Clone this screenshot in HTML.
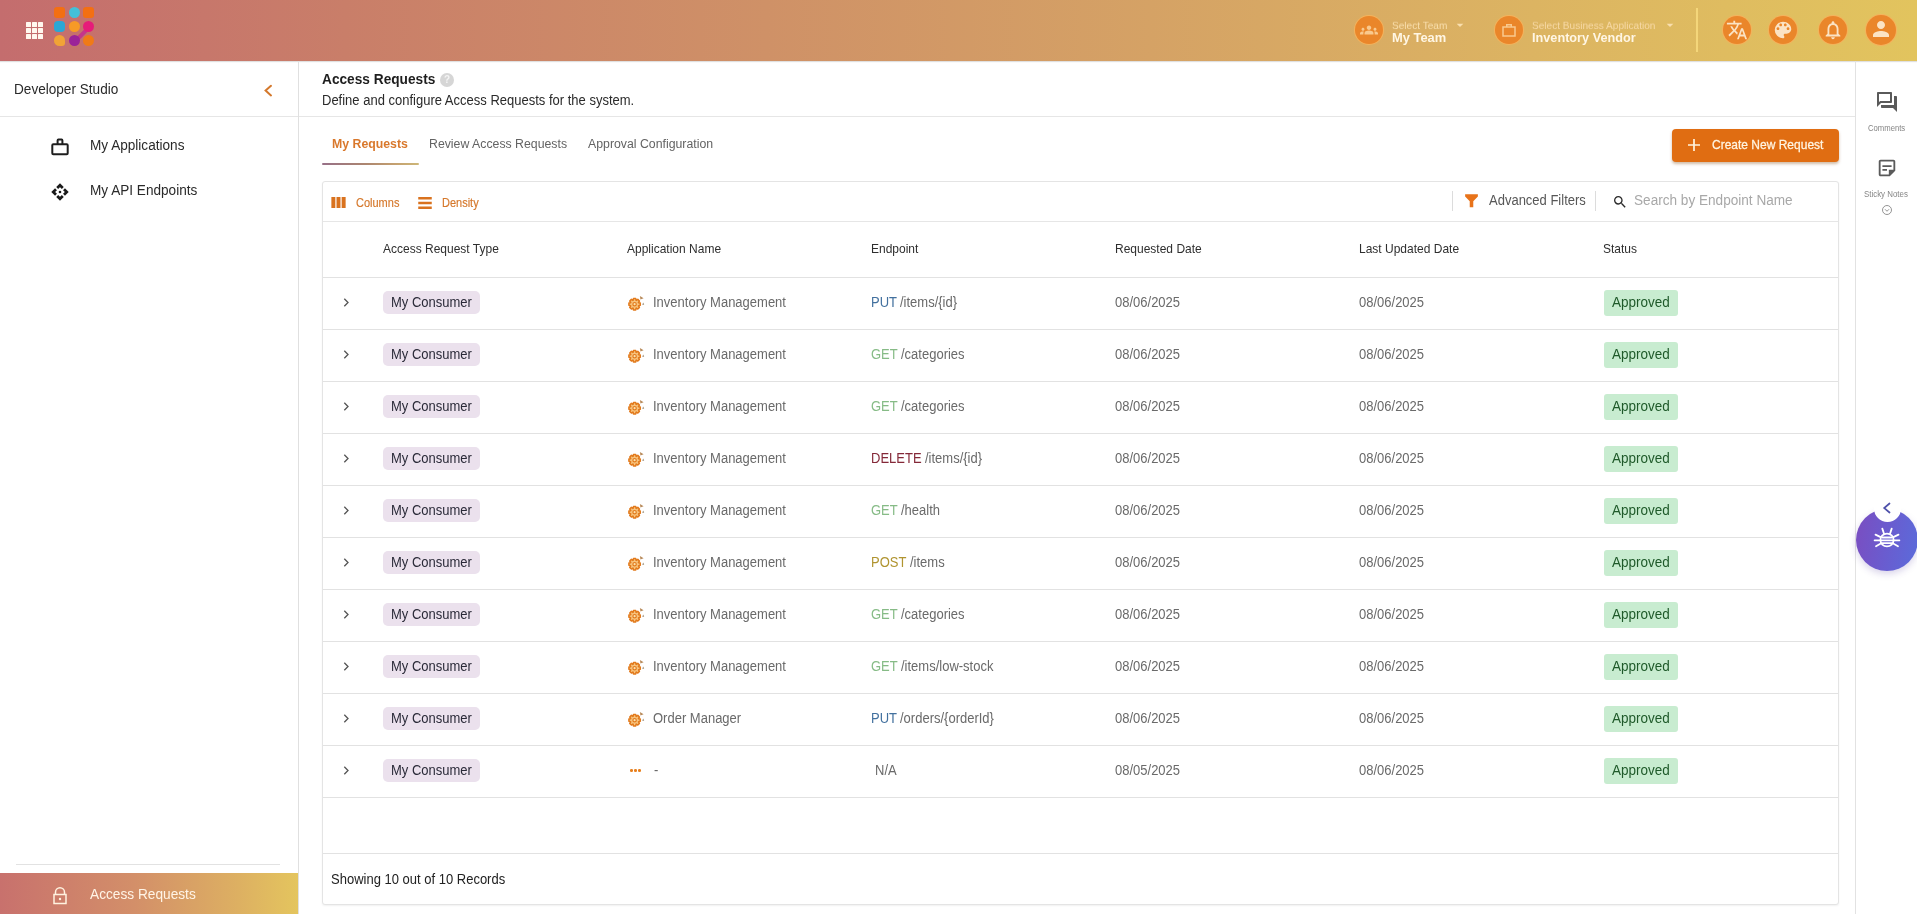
<!DOCTYPE html>
<html><head><meta charset="utf-8">
<style>
*{box-sizing:border-box;margin:0;padding:0}
html,body{width:1917px;height:914px;overflow:hidden;background:#fff;font-family:"Liberation Sans",sans-serif;color:#222}
.abs{position:absolute;display:block}
.t{position:absolute;white-space:nowrap;line-height:1;will-change:transform}
</style></head>
<body>
<div class="abs" style="left:0px;top:0px;width:1917px;height:61px;background:linear-gradient(90deg,#c46d6e 0%,#c97e69 18%,#cf9167 40%,#d5a265 60%,#dcb462 80%,#e2c45e 100%);box-shadow:0 1px 1px rgba(0,0,0,0.12)"></div>
<div class="abs" style="left:26px;top:22px;width:4.5px;height:4.5px;background:#fff8ee;border-radius:0.5px"></div>
<div class="abs" style="left:26px;top:28px;width:4.5px;height:4.5px;background:#fff8ee;border-radius:0.5px"></div>
<div class="abs" style="left:26px;top:34px;width:4.5px;height:4.5px;background:#fff8ee;border-radius:0.5px"></div>
<div class="abs" style="left:32px;top:22px;width:4.5px;height:4.5px;background:#fff8ee;border-radius:0.5px"></div>
<div class="abs" style="left:32px;top:28px;width:4.5px;height:4.5px;background:#fff8ee;border-radius:0.5px"></div>
<div class="abs" style="left:32px;top:34px;width:4.5px;height:4.5px;background:#fff8ee;border-radius:0.5px"></div>
<div class="abs" style="left:38px;top:22px;width:4.5px;height:4.5px;background:#fff8ee;border-radius:0.5px"></div>
<div class="abs" style="left:38px;top:28px;width:4.5px;height:4.5px;background:#fff8ee;border-radius:0.5px"></div>
<div class="abs" style="left:38px;top:34px;width:4.5px;height:4.5px;background:#fff8ee;border-radius:0.5px"></div>
<div class="abs" style="left:73px;top:32.5px;width:17px;height:4px;background:#c5358a;transform:rotate(-45deg);border-radius:2px"></div>
<div class="abs" style="left:54.0px;top:7.0px;width:11px;height:11px;background:#f36f12;border-radius:3px"></div>
<div class="abs" style="left:68.6px;top:7.0px;width:11px;height:11px;background:#43c0d8;border-radius:50%"></div>
<div class="abs" style="left:83.2px;top:7.0px;width:11px;height:11px;background:#f36f12;border-radius:3px"></div>
<div class="abs" style="left:54.0px;top:21.2px;width:11px;height:11px;background:#2aa7d4;border-radius:4px"></div>
<div class="abs" style="left:68.6px;top:21.2px;width:11px;height:11px;background:#f79a26;border-radius:50%"></div>
<div class="abs" style="left:83.2px;top:21.2px;width:11px;height:11px;background:#e61c79;border-radius:50%"></div>
<div class="abs" style="left:54.0px;top:35.4px;width:11px;height:11px;background:#f1a336;border-radius:50% 50% 3px 50%"></div>
<div class="abs" style="left:68.6px;top:35.4px;width:11px;height:11px;background:#9b2398;border-radius:50%"></div>
<div class="abs" style="left:83.2px;top:35.4px;width:11px;height:11px;background:#f07a17;border-radius:50%"></div>
<div class="abs" style="left:1355px;top:16px;width:28px;height:28px;background:#ea862a;border-radius:50%;box-shadow:0 0 0 1px #f5b25c"></div>
<svg class="abs" style="left:1360px;top:21px;" width="18" height="18" viewBox="0 0 24 24"><path fill="#f9c98e" d="M12 12.75c1.63 0 3.07.39 4.24.9 1.08.48 1.76 1.56 1.76 2.73V18H6v-1.61c0-1.18.68-2.26 1.76-2.73 1.17-.52 2.61-.91 4.24-.91zM4 13c1.1 0 2-.9 2-2s-.9-2-2-2-2 .9-2 2 .9 2 2 2zm1.13 1.1c-.37-.06-.74-.1-1.13-.1-.99 0-1.93.21-2.78.58C.48 14.9 0 15.62 0 16.43V18h4.5v-1.61c0-.83.23-1.61.63-2.29zM20 13c1.1 0 2-.9 2-2s-.9-2-2-2-2 .9-2 2 .9 2 2 2zm4 3.43c0-.81-.48-1.53-1.22-1.85-.85-.37-1.79-.58-2.78-.58-.39 0-.76.04-1.13.1.4.68.63 1.46.63 2.29V18H24v-1.57zM12 6c1.66 0 3 1.34 3 3s-1.34 3-3 3-3-1.34-3-3 1.34-3 3-3z"/></svg>
<div class="t" style="left:1391.5px;top:21.25px;font-size:10.1px;color:#f9dfae;font-weight:normal;transform-origin:0 8.55px;transform:scaleY(0.92);">Select Team</div>
<div class="t" style="left:1391.5px;top:32.48px;font-size:12.9px;color:#fff6e4;font-weight:bold;transform-origin:0 10.92px;transform:scaleY(1.0);">My Team</div>
<svg class="abs" style="left:1455px;top:20px;" width="10" height="10" viewBox="0 0 24 24"><path fill="#f9dfae" d="M4 9l8 8 8-8z"/></svg>
<div class="abs" style="left:1495px;top:16px;width:28px;height:28px;background:#ea862a;border-radius:50%;box-shadow:0 0 0 1px #f5b25c"></div>
<svg class="abs" style="left:1500px;top:21px;" width="18" height="18" viewBox="0 0 24 24"><path fill="none" stroke="#f9c98e" stroke-width="2" d="M4 8h16v12H4zM9 8V5h6v3"/></svg>
<div class="t" style="left:1531.5px;top:21.25px;font-size:10.1px;color:#f7d9a6;font-weight:normal;transform-origin:0 8.55px;transform:scaleY(0.92);">Select Business Application</div>
<div class="t" style="left:1531.5px;top:32.45px;font-size:12.7px;color:#fff6e4;font-weight:bold;transform-origin:0 10.75px;transform:scaleY(1.0);">Inventory Vendor</div>
<svg class="abs" style="left:1665px;top:20px;" width="10" height="10" viewBox="0 0 24 24"><path fill="#f9dfae" d="M4 9l8 8 8-8z"/></svg>
<div class="abs" style="left:1696px;top:8px;width:2px;height:44px;background:#f4d67a"></div>
<div class="abs" style="left:1723px;top:16px;width:28px;height:28px;background:#ea862a;border-radius:50%;box-shadow:0 0 0 1px #f5b25c"></div>
<div class="abs" style="left:1769px;top:16px;width:28px;height:28px;background:#ea862a;border-radius:50%;box-shadow:0 0 0 1px #f5b25c"></div>
<div class="abs" style="left:1819px;top:16px;width:28px;height:28px;background:#ea862a;border-radius:50%;box-shadow:0 0 0 1px #f5b25c"></div>
<div class="abs" style="left:1866px;top:14.5px;width:30px;height:30px;background:#ea862a;border-radius:50%;box-shadow:0 0 0 1px #f5b25c"></div>
<svg class="abs" style="left:1726px;top:19px;" width="22" height="22" viewBox="0 0 24 24"><path fill="#fbe3c4" d="M12.87 15.07l-2.54-2.51.03-.03c1.74-1.94 2.98-4.17 3.71-6.53H17V4h-7V2H8v2H1v1.99h11.17C11.5 7.92 10.44 9.75 9 11.35 8.07 10.32 7.3 9.19 6.69 8h-2c.73 1.63 1.73 3.17 2.98 4.56l-5.09 5.02L4 19l5-5 3.11 3.11.76-2.04zM18.5 10h-2L12 22h2l1.12-3h4.75L21 22h2l-4.5-12zm-2.62 7l1.62-4.33L19.12 17h-3.24z"/></svg>
<svg class="abs" style="left:1772px;top:19px;" width="22" height="22" viewBox="0 0 24 24"><path fill="#fbe3c4" d="M12 3a9 9 0 0 0 0 18c.83 0 1.5-.67 1.5-1.5 0-.39-.15-.74-.39-1.01-.23-.26-.38-.61-.38-.99 0-.83.67-1.5 1.5-1.5H16c2.76 0 5-2.24 5-5 0-4.42-4.03-8-9-8zm-5.5 9c-.83 0-1.5-.67-1.5-1.5S5.67 9 6.5 9 8 9.67 8 10.5 7.33 12 6.5 12zm3-4C8.67 8 8 7.33 8 6.5S8.67 5 9.5 5s1.5.67 1.5 1.5S10.33 8 9.5 8zm5 0c-.83 0-1.5-.67-1.5-1.5S13.67 5 14.5 5s1.5.67 1.5 1.5S15.33 8 14.5 8zm3 4c-.83 0-1.5-.67-1.5-1.5S16.67 9 17.5 9s1.5.67 1.5 1.5-.67 1.5-1.5 1.5z"/></svg>
<svg class="abs" style="left:1822px;top:19px;" width="22" height="22" viewBox="0 0 24 24"><path fill="#fbe3c4" d="M12 22c1.1 0 2-.9 2-2h-4c0 1.1.89 2 2 2zm6-6v-5c0-3.07-1.64-5.64-4.5-6.32V4c0-.83-.67-1.5-1.5-1.5s-1.5.67-1.5 1.5v.68C7.63 5.36 6 7.92 6 11v5l-2 2v1h16v-1l-2-2zm-2 1H8v-6c0-2.48 1.51-4.5 4-4.5s4 2.02 4 4.5v6z"/></svg>
<svg class="abs" style="left:1869px;top:17px;" width="24" height="24" viewBox="0 0 24 24"><path fill="#fbe3c4" d="M12 12c2.21 0 4-1.79 4-4s-1.79-4-4-4-4 1.79-4 4 1.79 4 4 4zm0 2c-2.67 0-8 1.34-8 4v2h16v-2c0-2.66-5.33-4-8-4z"/></svg>
<div class="abs" style="left:298px;top:61px;width:1px;height:853px;background:#e0e0e0"></div>
<div class="t" style="left:13.5px;top:82.89px;font-size:13.6px;color:#2a2a2a;font-weight:normal;transform-origin:0 11.51px;transform:scaleY(1.08);">Developer Studio</div>
<div class="abs" style="left:0px;top:116px;width:298px;height:1px;background:#e6e6e6"></div>
<div class="t" style="left:90.0px;top:139.29px;font-size:13.6px;color:#2a2a2a;font-weight:normal;transform-origin:0 11.51px;transform:scaleY(1.08);">My Applications</div>
<div class="t" style="left:90.0px;top:184.39px;font-size:13.6px;color:#2a2a2a;font-weight:normal;transform-origin:0 11.51px;transform:scaleY(1.08);">My API Endpoints</div>
<div class="abs" style="left:16px;top:864px;width:264px;height:1px;background:#e2e2e2"></div>
<div class="abs" style="left:0px;top:873px;width:298px;height:41px;background:linear-gradient(90deg,#c8716d 0%,#d38f69 45%,#ddb062 80%,#e4c55e 100%)"></div>
<svg class="abs" style="left:51px;top:885.5px;" width="18" height="20" viewBox="0 0 24 24"><path fill="none" stroke="#fff2e0" stroke-width="2" d="M6 10V7a6 6 0 0 1 12 0v3M4 10h16v12H4z"/><circle cx="12" cy="16" r="1.6" fill="#fff2e0"/></svg>
<div class="t" style="left:89.5px;top:888.00px;font-size:13.7px;color:#fff4e6;font-weight:normal;transform-origin:0 11.60px;transform:scaleY(1.08);">Access Requests</div>
<div class="t" style="left:321.5px;top:72.50px;font-size:13.7px;color:#1e1e1e;font-weight:bold;transform-origin:0 11.60px;transform:scaleY(1.08);">Access Requests</div>
<div class="abs" style="left:440px;top:72.5px;width:14px;height:14px;background:#d6d6d6;border-radius:50%"></div>
<div class="t" style="left:443.5px;top:75.03px;font-size:10px;color:#f4f4f4;font-weight:bold;transform-origin:0 8.46px;transform:scaleY(1.08);">?</div>
<div class="t" style="left:321.5px;top:93.70px;font-size:13px;color:#2a2a2a;font-weight:normal;transform-origin:0 11.00px;transform:scaleY(1.08);">Define and configure Access Requests for the system.</div>
<div class="abs" style="left:299px;top:116px;width:1556px;height:1px;background:#e6e6e6"></div>
<div class="t" style="left:331.5px;top:137.59px;font-size:12.3px;color:#d9782c;font-weight:bold;transform-origin:0 10.41px;transform:scaleY(1.08);">My Requests</div>
<div class="t" style="left:428.5px;top:137.59px;font-size:12.3px;color:#636363;font-weight:normal;transform-origin:0 10.41px;transform:scaleY(1.08);">Review Access Requests</div>
<div class="t" style="left:587.5px;top:137.59px;font-size:12.3px;color:#636363;font-weight:normal;transform-origin:0 10.41px;transform:scaleY(1.08);">Approval Configuration</div>
<div class="abs" style="left:322px;top:163px;width:97px;height:2.4px;background:linear-gradient(90deg,#977088,#ac8670 45%,#c4a070 75%,#cdb778);border-radius:1px"></div>
<div class="abs" style="left:1672px;top:129px;width:167px;height:33px;background:#e06d12;border-radius:4px;box-shadow:0 2px 3px rgba(120,60,0,0.35)"></div>
<svg class="abs" style="left:1686px;top:137px;" width="16" height="16" viewBox="0 0 24 24"><path fill="none" stroke="#fff3dc" stroke-width="2.6" d="M12 3v18M3 12h18"/></svg>
<div class="t" style="left:1711.5px;top:138.74px;font-size:12px;color:#fff5e2;font-weight:normal;transform-origin:0 10.16px;transform:scaleY(1.08);-webkit-text-stroke:0.25px #fff5e2">Create New Request</div>
<div class="abs" style="left:322px;top:181px;width:1517px;height:724px;border:1px solid #e4e4e4;border-radius:3px;background:#fff;box-shadow:0 1px 2px rgba(0,0,0,0.06)"></div>
<div class="abs" style="left:323px;top:221px;width:1515px;height:1px;background:#e6e6e6"></div>
<svg class="abs" style="left:329px;top:193px;" width="19" height="19" viewBox="0 0 24 24"><path fill="#d9721e" d="M3 5h5v14H3zM9.5 5h5v14h-5zM16 5h5v14h-5z"/></svg>
<div class="t" style="left:355.5px;top:197.69px;font-size:11px;color:#d5782c;font-weight:normal;transform-origin:0 9.31px;transform:scaleY(1.08);-webkit-text-stroke:0.15px #d5782c">Columns</div>
<svg class="abs" style="left:416px;top:194px;" width="18" height="18" viewBox="0 0 24 24"><path fill="#d9721e" d="M3 4h18v3.4H3zM3 10.3h18v3.4H3zM3 16.6h18v3.4H3z"/></svg>
<div class="t" style="left:441.5px;top:197.69px;font-size:11px;color:#d5782c;font-weight:normal;transform-origin:0 9.31px;transform:scaleY(1.08);-webkit-text-stroke:0.15px #d5782c">Density</div>
<div class="abs" style="left:1452px;top:191px;width:1px;height:20px;background:#dcdcdc"></div>
<svg class="abs" style="left:1463px;top:192px;" width="17" height="17" viewBox="0 0 24 24"><path fill="#e8731a" d="M3 3h18v3.5l-6.5 6.5v8.5h-5v-8.5L3 6.5z"/></svg>
<div class="t" style="left:1489.1px;top:194.10px;font-size:13px;color:#575757;font-weight:normal;transform-origin:0 11.00px;transform:scaleY(1.08);">Advanced Filters</div>
<div class="abs" style="left:1595px;top:191px;width:1px;height:20px;background:#dcdcdc"></div>
<svg class="abs" style="left:1612px;top:194px;" width="16" height="16" viewBox="0 0 24 24"><path fill="#2a2a2a" d="M15.5 14h-.79l-.28-.27A6.471 6.471 0 0 0 16 9.5 6.5 6.5 0 1 0 9.5 16c1.61 0 3.09-.59 4.23-1.57l.27.28v.79l5 4.99L20.49 19l-4.99-5zm-6 0C7.01 14 5 11.99 5 9.5S7.01 5 9.5 5 14 7.01 14 9.5 11.99 14 9.5 14z"/></svg>
<div class="t" style="left:1633.7px;top:193.99px;font-size:13.6px;color:#a8a8a8;font-weight:normal;transform-origin:0 11.51px;transform:scaleY(1.08);">Search by Endpoint Name</div>
<div class="t" style="left:382.5px;top:243.04px;font-size:12px;color:#2e2e2e;font-weight:normal;transform-origin:0 10.16px;transform:scaleY(1.08);">Access Request Type</div>
<div class="t" style="left:626.5px;top:243.04px;font-size:12px;color:#2e2e2e;font-weight:normal;transform-origin:0 10.16px;transform:scaleY(1.08);">Application Name</div>
<div class="t" style="left:870.5px;top:243.04px;font-size:12px;color:#2e2e2e;font-weight:normal;transform-origin:0 10.16px;transform:scaleY(1.08);">Endpoint</div>
<div class="t" style="left:1114.5px;top:243.04px;font-size:12px;color:#2e2e2e;font-weight:normal;transform-origin:0 10.16px;transform:scaleY(1.08);">Requested Date</div>
<div class="t" style="left:1358.5px;top:243.04px;font-size:12px;color:#2e2e2e;font-weight:normal;transform-origin:0 10.16px;transform:scaleY(1.08);">Last Updated Date</div>
<div class="t" style="left:1602.5px;top:243.04px;font-size:12px;color:#2e2e2e;font-weight:normal;transform-origin:0 10.16px;transform:scaleY(1.08);">Status</div>
<div class="abs" style="left:323px;top:277px;width:1515px;height:1px;background:#e2e2e2"></div>
<div class="abs" style="left:383px;top:290.7px;width:96.5px;height:23.5px;background:#ebe1ed;border-radius:5px"></div>
<div class="t" style="left:391.0px;top:296.20px;font-size:13px;color:#2a2a38;font-weight:normal;transform-origin:0 11.00px;transform:scaleY(1.08);">My Consumer</div>
<div class="t" style="left:653.0px;top:296.20px;font-size:13px;color:#6a6a6a;font-weight:normal;transform-origin:0 11.00px;transform:scaleY(1.08);">Inventory Management</div>
<div class="t" style="left:871.0px;top:296.20px;font-size:13px;color:#42709e;font-weight:normal;transform-origin:0 11.00px;transform:scaleY(1.08);">PUT</div>
<div class="t" style="left:900.4px;top:296.20px;font-size:13px;color:#6a6a6a;font-weight:normal;transform-origin:0 11.00px;transform:scaleY(1.08);">/items/{id}</div>
<div class="t" style="left:1115.0px;top:296.20px;font-size:13px;color:#6a6a6a;font-weight:normal;transform-origin:0 11.00px;transform:scaleY(1.08);">08/06/2025</div>
<div class="t" style="left:1359.0px;top:296.20px;font-size:13px;color:#6a6a6a;font-weight:normal;transform-origin:0 11.00px;transform:scaleY(1.08);">08/06/2025</div>
<div class="abs" style="left:1604px;top:290px;width:74px;height:26px;background:#c8ecd0;border-radius:3px"></div>
<div class="t" style="left:1611.5px;top:295.77px;font-size:13.5px;color:#1f5a2a;font-weight:normal;transform-origin:0 11.43px;transform:scaleY(1.08);">Approved</div>
<div class="abs" style="left:323px;top:329px;width:1515px;height:1px;background:#e2e2e2"></div>
<div class="abs" style="left:383px;top:342.7px;width:96.5px;height:23.5px;background:#ebe1ed;border-radius:5px"></div>
<div class="t" style="left:391.0px;top:348.20px;font-size:13px;color:#2a2a38;font-weight:normal;transform-origin:0 11.00px;transform:scaleY(1.08);">My Consumer</div>
<div class="t" style="left:653.0px;top:348.20px;font-size:13px;color:#6a6a6a;font-weight:normal;transform-origin:0 11.00px;transform:scaleY(1.08);">Inventory Management</div>
<div class="t" style="left:871.0px;top:348.20px;font-size:13px;color:#86bb86;font-weight:normal;transform-origin:0 11.00px;transform:scaleY(1.08);">GET</div>
<div class="t" style="left:901.1px;top:348.20px;font-size:13px;color:#6a6a6a;font-weight:normal;transform-origin:0 11.00px;transform:scaleY(1.08);">/categories</div>
<div class="t" style="left:1115.0px;top:348.20px;font-size:13px;color:#6a6a6a;font-weight:normal;transform-origin:0 11.00px;transform:scaleY(1.08);">08/06/2025</div>
<div class="t" style="left:1359.0px;top:348.20px;font-size:13px;color:#6a6a6a;font-weight:normal;transform-origin:0 11.00px;transform:scaleY(1.08);">08/06/2025</div>
<div class="abs" style="left:1604px;top:342px;width:74px;height:26px;background:#c8ecd0;border-radius:3px"></div>
<div class="t" style="left:1611.5px;top:347.77px;font-size:13.5px;color:#1f5a2a;font-weight:normal;transform-origin:0 11.43px;transform:scaleY(1.08);">Approved</div>
<div class="abs" style="left:323px;top:381px;width:1515px;height:1px;background:#e2e2e2"></div>
<div class="abs" style="left:383px;top:394.7px;width:96.5px;height:23.5px;background:#ebe1ed;border-radius:5px"></div>
<div class="t" style="left:391.0px;top:400.20px;font-size:13px;color:#2a2a38;font-weight:normal;transform-origin:0 11.00px;transform:scaleY(1.08);">My Consumer</div>
<div class="t" style="left:653.0px;top:400.20px;font-size:13px;color:#6a6a6a;font-weight:normal;transform-origin:0 11.00px;transform:scaleY(1.08);">Inventory Management</div>
<div class="t" style="left:871.0px;top:400.20px;font-size:13px;color:#86bb86;font-weight:normal;transform-origin:0 11.00px;transform:scaleY(1.08);">GET</div>
<div class="t" style="left:901.1px;top:400.20px;font-size:13px;color:#6a6a6a;font-weight:normal;transform-origin:0 11.00px;transform:scaleY(1.08);">/categories</div>
<div class="t" style="left:1115.0px;top:400.20px;font-size:13px;color:#6a6a6a;font-weight:normal;transform-origin:0 11.00px;transform:scaleY(1.08);">08/06/2025</div>
<div class="t" style="left:1359.0px;top:400.20px;font-size:13px;color:#6a6a6a;font-weight:normal;transform-origin:0 11.00px;transform:scaleY(1.08);">08/06/2025</div>
<div class="abs" style="left:1604px;top:394px;width:74px;height:26px;background:#c8ecd0;border-radius:3px"></div>
<div class="t" style="left:1611.5px;top:399.77px;font-size:13.5px;color:#1f5a2a;font-weight:normal;transform-origin:0 11.43px;transform:scaleY(1.08);">Approved</div>
<div class="abs" style="left:323px;top:433px;width:1515px;height:1px;background:#e2e2e2"></div>
<div class="abs" style="left:383px;top:446.7px;width:96.5px;height:23.5px;background:#ebe1ed;border-radius:5px"></div>
<div class="t" style="left:391.0px;top:452.20px;font-size:13px;color:#2a2a38;font-weight:normal;transform-origin:0 11.00px;transform:scaleY(1.08);">My Consumer</div>
<div class="t" style="left:653.0px;top:452.20px;font-size:13px;color:#6a6a6a;font-weight:normal;transform-origin:0 11.00px;transform:scaleY(1.08);">Inventory Management</div>
<div class="t" style="left:871.0px;top:452.20px;font-size:13px;color:#842838;font-weight:normal;transform-origin:0 11.00px;transform:scaleY(1.08);">DELETE</div>
<div class="t" style="left:925.2px;top:452.20px;font-size:13px;color:#6a6a6a;font-weight:normal;transform-origin:0 11.00px;transform:scaleY(1.08);">/items/{id}</div>
<div class="t" style="left:1115.0px;top:452.20px;font-size:13px;color:#6a6a6a;font-weight:normal;transform-origin:0 11.00px;transform:scaleY(1.08);">08/06/2025</div>
<div class="t" style="left:1359.0px;top:452.20px;font-size:13px;color:#6a6a6a;font-weight:normal;transform-origin:0 11.00px;transform:scaleY(1.08);">08/06/2025</div>
<div class="abs" style="left:1604px;top:446px;width:74px;height:26px;background:#c8ecd0;border-radius:3px"></div>
<div class="t" style="left:1611.5px;top:451.77px;font-size:13.5px;color:#1f5a2a;font-weight:normal;transform-origin:0 11.43px;transform:scaleY(1.08);">Approved</div>
<div class="abs" style="left:323px;top:485px;width:1515px;height:1px;background:#e2e2e2"></div>
<div class="abs" style="left:383px;top:498.7px;width:96.5px;height:23.5px;background:#ebe1ed;border-radius:5px"></div>
<div class="t" style="left:391.0px;top:504.20px;font-size:13px;color:#2a2a38;font-weight:normal;transform-origin:0 11.00px;transform:scaleY(1.08);">My Consumer</div>
<div class="t" style="left:653.0px;top:504.20px;font-size:13px;color:#6a6a6a;font-weight:normal;transform-origin:0 11.00px;transform:scaleY(1.08);">Inventory Management</div>
<div class="t" style="left:871.0px;top:504.20px;font-size:13px;color:#86bb86;font-weight:normal;transform-origin:0 11.00px;transform:scaleY(1.08);">GET</div>
<div class="t" style="left:901.1px;top:504.20px;font-size:13px;color:#6a6a6a;font-weight:normal;transform-origin:0 11.00px;transform:scaleY(1.08);">/health</div>
<div class="t" style="left:1115.0px;top:504.20px;font-size:13px;color:#6a6a6a;font-weight:normal;transform-origin:0 11.00px;transform:scaleY(1.08);">08/06/2025</div>
<div class="t" style="left:1359.0px;top:504.20px;font-size:13px;color:#6a6a6a;font-weight:normal;transform-origin:0 11.00px;transform:scaleY(1.08);">08/06/2025</div>
<div class="abs" style="left:1604px;top:498px;width:74px;height:26px;background:#c8ecd0;border-radius:3px"></div>
<div class="t" style="left:1611.5px;top:503.77px;font-size:13.5px;color:#1f5a2a;font-weight:normal;transform-origin:0 11.43px;transform:scaleY(1.08);">Approved</div>
<div class="abs" style="left:323px;top:537px;width:1515px;height:1px;background:#e2e2e2"></div>
<div class="abs" style="left:383px;top:550.7px;width:96.5px;height:23.5px;background:#ebe1ed;border-radius:5px"></div>
<div class="t" style="left:391.0px;top:556.20px;font-size:13px;color:#2a2a38;font-weight:normal;transform-origin:0 11.00px;transform:scaleY(1.08);">My Consumer</div>
<div class="t" style="left:653.0px;top:556.20px;font-size:13px;color:#6a6a6a;font-weight:normal;transform-origin:0 11.00px;transform:scaleY(1.08);">Inventory Management</div>
<div class="t" style="left:871.0px;top:556.20px;font-size:13px;color:#b09430;font-weight:normal;transform-origin:0 11.00px;transform:scaleY(1.08);">POST</div>
<div class="t" style="left:909.8px;top:556.20px;font-size:13px;color:#6a6a6a;font-weight:normal;transform-origin:0 11.00px;transform:scaleY(1.08);">/items</div>
<div class="t" style="left:1115.0px;top:556.20px;font-size:13px;color:#6a6a6a;font-weight:normal;transform-origin:0 11.00px;transform:scaleY(1.08);">08/06/2025</div>
<div class="t" style="left:1359.0px;top:556.20px;font-size:13px;color:#6a6a6a;font-weight:normal;transform-origin:0 11.00px;transform:scaleY(1.08);">08/06/2025</div>
<div class="abs" style="left:1604px;top:550px;width:74px;height:26px;background:#c8ecd0;border-radius:3px"></div>
<div class="t" style="left:1611.5px;top:555.77px;font-size:13.5px;color:#1f5a2a;font-weight:normal;transform-origin:0 11.43px;transform:scaleY(1.08);">Approved</div>
<div class="abs" style="left:323px;top:589px;width:1515px;height:1px;background:#e2e2e2"></div>
<div class="abs" style="left:383px;top:602.7px;width:96.5px;height:23.5px;background:#ebe1ed;border-radius:5px"></div>
<div class="t" style="left:391.0px;top:608.20px;font-size:13px;color:#2a2a38;font-weight:normal;transform-origin:0 11.00px;transform:scaleY(1.08);">My Consumer</div>
<div class="t" style="left:653.0px;top:608.20px;font-size:13px;color:#6a6a6a;font-weight:normal;transform-origin:0 11.00px;transform:scaleY(1.08);">Inventory Management</div>
<div class="t" style="left:871.0px;top:608.20px;font-size:13px;color:#86bb86;font-weight:normal;transform-origin:0 11.00px;transform:scaleY(1.08);">GET</div>
<div class="t" style="left:901.1px;top:608.20px;font-size:13px;color:#6a6a6a;font-weight:normal;transform-origin:0 11.00px;transform:scaleY(1.08);">/categories</div>
<div class="t" style="left:1115.0px;top:608.20px;font-size:13px;color:#6a6a6a;font-weight:normal;transform-origin:0 11.00px;transform:scaleY(1.08);">08/06/2025</div>
<div class="t" style="left:1359.0px;top:608.20px;font-size:13px;color:#6a6a6a;font-weight:normal;transform-origin:0 11.00px;transform:scaleY(1.08);">08/06/2025</div>
<div class="abs" style="left:1604px;top:602px;width:74px;height:26px;background:#c8ecd0;border-radius:3px"></div>
<div class="t" style="left:1611.5px;top:607.77px;font-size:13.5px;color:#1f5a2a;font-weight:normal;transform-origin:0 11.43px;transform:scaleY(1.08);">Approved</div>
<div class="abs" style="left:323px;top:641px;width:1515px;height:1px;background:#e2e2e2"></div>
<div class="abs" style="left:383px;top:654.7px;width:96.5px;height:23.5px;background:#ebe1ed;border-radius:5px"></div>
<div class="t" style="left:391.0px;top:660.20px;font-size:13px;color:#2a2a38;font-weight:normal;transform-origin:0 11.00px;transform:scaleY(1.08);">My Consumer</div>
<div class="t" style="left:653.0px;top:660.20px;font-size:13px;color:#6a6a6a;font-weight:normal;transform-origin:0 11.00px;transform:scaleY(1.08);">Inventory Management</div>
<div class="t" style="left:871.0px;top:660.20px;font-size:13px;color:#86bb86;font-weight:normal;transform-origin:0 11.00px;transform:scaleY(1.08);">GET</div>
<div class="t" style="left:901.1px;top:660.20px;font-size:13px;color:#6a6a6a;font-weight:normal;transform-origin:0 11.00px;transform:scaleY(1.08);">/items/low-stock</div>
<div class="t" style="left:1115.0px;top:660.20px;font-size:13px;color:#6a6a6a;font-weight:normal;transform-origin:0 11.00px;transform:scaleY(1.08);">08/06/2025</div>
<div class="t" style="left:1359.0px;top:660.20px;font-size:13px;color:#6a6a6a;font-weight:normal;transform-origin:0 11.00px;transform:scaleY(1.08);">08/06/2025</div>
<div class="abs" style="left:1604px;top:654px;width:74px;height:26px;background:#c8ecd0;border-radius:3px"></div>
<div class="t" style="left:1611.5px;top:659.77px;font-size:13.5px;color:#1f5a2a;font-weight:normal;transform-origin:0 11.43px;transform:scaleY(1.08);">Approved</div>
<div class="abs" style="left:323px;top:693px;width:1515px;height:1px;background:#e2e2e2"></div>
<div class="abs" style="left:383px;top:706.7px;width:96.5px;height:23.5px;background:#ebe1ed;border-radius:5px"></div>
<div class="t" style="left:391.0px;top:712.20px;font-size:13px;color:#2a2a38;font-weight:normal;transform-origin:0 11.00px;transform:scaleY(1.08);">My Consumer</div>
<div class="t" style="left:653.0px;top:712.20px;font-size:13px;color:#6a6a6a;font-weight:normal;transform-origin:0 11.00px;transform:scaleY(1.08);">Order Manager</div>
<div class="t" style="left:871.0px;top:712.20px;font-size:13px;color:#42709e;font-weight:normal;transform-origin:0 11.00px;transform:scaleY(1.08);">PUT</div>
<div class="t" style="left:900.4px;top:712.20px;font-size:13px;color:#6a6a6a;font-weight:normal;transform-origin:0 11.00px;transform:scaleY(1.08);">/orders/{orderId}</div>
<div class="t" style="left:1115.0px;top:712.20px;font-size:13px;color:#6a6a6a;font-weight:normal;transform-origin:0 11.00px;transform:scaleY(1.08);">08/06/2025</div>
<div class="t" style="left:1359.0px;top:712.20px;font-size:13px;color:#6a6a6a;font-weight:normal;transform-origin:0 11.00px;transform:scaleY(1.08);">08/06/2025</div>
<div class="abs" style="left:1604px;top:706px;width:74px;height:26px;background:#c8ecd0;border-radius:3px"></div>
<div class="t" style="left:1611.5px;top:711.77px;font-size:13.5px;color:#1f5a2a;font-weight:normal;transform-origin:0 11.43px;transform:scaleY(1.08);">Approved</div>
<div class="abs" style="left:323px;top:745px;width:1515px;height:1px;background:#e2e2e2"></div>
<div class="abs" style="left:383px;top:758.7px;width:96.5px;height:23.5px;background:#ebe1ed;border-radius:5px"></div>
<div class="t" style="left:391.0px;top:764.20px;font-size:13px;color:#2a2a38;font-weight:normal;transform-origin:0 11.00px;transform:scaleY(1.08);">My Consumer</div>
<div class="abs" style="left:630.0px;top:769px;width:2.6px;height:2.6px;background:#e8801e;border-radius:50%"></div>
<div class="abs" style="left:634.2px;top:769px;width:2.6px;height:2.6px;background:#e8801e;border-radius:50%"></div>
<div class="abs" style="left:638.4px;top:769px;width:2.6px;height:2.6px;background:#e8801e;border-radius:50%"></div>
<div class="t" style="left:653.5px;top:764.20px;font-size:13px;color:#6a6a6a;font-weight:normal;transform-origin:0 11.00px;transform:scaleY(1.08);">-</div>
<div class="t" style="left:875.0px;top:764.20px;font-size:13px;color:#6a6a6a;font-weight:normal;transform-origin:0 11.00px;transform:scaleY(1.08);">N/A</div>
<div class="t" style="left:1115.0px;top:764.20px;font-size:13px;color:#6a6a6a;font-weight:normal;transform-origin:0 11.00px;transform:scaleY(1.08);">08/05/2025</div>
<div class="t" style="left:1359.0px;top:764.20px;font-size:13px;color:#6a6a6a;font-weight:normal;transform-origin:0 11.00px;transform:scaleY(1.08);">08/06/2025</div>
<div class="abs" style="left:1604px;top:758px;width:74px;height:26px;background:#c8ecd0;border-radius:3px"></div>
<div class="t" style="left:1611.5px;top:763.77px;font-size:13.5px;color:#1f5a2a;font-weight:normal;transform-origin:0 11.43px;transform:scaleY(1.08);">Approved</div>
<div class="abs" style="left:323px;top:797px;width:1515px;height:1px;background:#e2e2e2"></div>
<div class="abs" style="left:323px;top:853px;width:1515px;height:1px;background:#e2e2e2"></div>
<div class="t" style="left:331.0px;top:873.00px;font-size:13px;color:#222;font-weight:normal;transform-origin:0 11.00px;transform:scaleY(1.08);">Showing 10 out of 10 Records</div>
<div class="abs" style="left:1855px;top:61px;width:1px;height:853px;background:#e2e2e2"></div>
<svg class="abs" style="left:1875px;top:90px;" width="24" height="24" viewBox="0 0 24 24"><path fill="#5a5a5a" d="M15 4v7H5.17l-.59.59-.58.58V4h11m1-2H3c-.55 0-1 .45-1 1v14l4-4h10c.55 0 1-.45 1-1V3c0-.55-.45-1-1-1zm5 4h-2v9H6v2c0 .55.45 1 1 1h11l4 4V7c0-.55-.45-1-1-1z"/></svg>
<div class="t" style="left:1867.7px;top:124.98px;font-size:7.7px;color:#858585;font-weight:normal;transform-origin:0 6.52px;transform:scaleY(1.08);">Comments</div>
<svg class="abs" style="left:1876px;top:157px;" width="22" height="22" viewBox="0 0 24 24"><path fill="#5a5a5a" d="M19 3H4.99C3.89 3 3 3.9 3 5l.01 14c0 1.1.89 2 1.99 2h10l6-6V5c0-1.1-.9-2-2-2zM5 5h14v9h-5v5H5V5zm2 4h10v2H7zm0 4h5v2H7z"/></svg>
<div class="t" style="left:1864.1px;top:190.81px;font-size:7.9px;color:#858585;font-weight:normal;transform-origin:0 6.69px;transform:scaleY(1.08);">Sticky Notes</div>
<svg class="abs" style="left:1881px;top:204px;" width="12" height="12" viewBox="0 0 24 24"><circle cx="12" cy="12" r="9" fill="none" stroke="#888" stroke-width="1.8"/><path fill="none" stroke="#888" stroke-width="1.8" d="M8 10.5l4 4 4-4"/></svg>
<div class="abs" style="left:1855.8px;top:508.7px;width:62px;height:62px;background:linear-gradient(100deg,#7b4dc0 0%,#6a5ccf 50%,#5a6cdb 100%);border-radius:50%;box-shadow:0 3px 7px rgba(80,60,160,0.22)"></div>
<div class="abs" style="left:1873.5px;top:495px;width:27px;height:27px;background:#fff;border-radius:50%"></div>
<svg class="abs" style="left:0;top:0" width="1917" height="914"><path fill="none" stroke="#d4782c" stroke-width="2" stroke-linecap="round" d="M271 85.8L265.6 90.6L271 95.4"/><g fill="none" stroke="#1e1e1e" stroke-width="2"><rect x="52.3" y="144.2" width="15.4" height="10" rx="1"/><path d="M57.6 144V140.4Q57.6 139.6 58.4 139.6H61.6Q62.4 139.6 62.4 140.4V144"/></g><g fill="none" stroke="#1a1a1a" stroke-width="2.7" stroke-linejoin="miter"><path d="M57.2 188L60 185.2L62.8 188"/><path d="M56 189.2L53.2 192L56 194.8"/><path d="M64 189.2L66.8 192L64 194.8"/><path d="M57.2 196L60 198.8L62.8 196"/></g><circle fill="#1a1a1a" cx="60" cy="192" r="1.3"/><path fill="none" stroke="#555" stroke-width="1.3" d="M344.3 298.7L348 302.5L344.3 306.3"/><path d="M638.53 302.72L640.28 303.05L640.28 305.35L638.53 305.68L638.43 305.93L639.43 307.40L637.80 309.03L636.33 308.03L636.08 308.13L635.75 309.88L633.45 309.88L633.12 308.13L632.87 308.03L631.40 309.03L629.77 307.40L630.77 305.93L630.67 305.68L628.92 305.35L628.92 303.05L630.67 302.72L630.77 302.47L629.77 301.00L631.40 299.37L632.87 300.37L633.12 300.27L633.45 298.52L635.75 298.52L636.08 300.27L636.33 300.37L637.80 299.37L639.43 301.00L638.43 302.47Z" fill="#f7c47e" stroke="#e27a1c" stroke-width="1.5" stroke-linejoin="round"/><circle cx="634.6" cy="304.2" r="1.7" fill="#fbe0b0" stroke="#e27a1c" stroke-width="1.2"/><path d="M639.9 295.9L643.6 298.2L640.4 299.59999999999997Z" fill="#b88a5a"/><path d="M643.2 302.59999999999997L644.2 304.8L642.2 304.8Z" fill="#9a8a70"/><path fill="none" stroke="#555" stroke-width="1.3" d="M344.3 350.7L348 354.5L344.3 358.3"/><path d="M638.53 354.72L640.28 355.05L640.28 357.35L638.53 357.68L638.43 357.93L639.43 359.40L637.80 361.03L636.33 360.03L636.08 360.13L635.75 361.88L633.45 361.88L633.12 360.13L632.87 360.03L631.40 361.03L629.77 359.40L630.77 357.93L630.67 357.68L628.92 357.35L628.92 355.05L630.67 354.72L630.77 354.47L629.77 353.00L631.40 351.37L632.87 352.37L633.12 352.27L633.45 350.52L635.75 350.52L636.08 352.27L636.33 352.37L637.80 351.37L639.43 353.00L638.43 354.47Z" fill="#f7c47e" stroke="#e27a1c" stroke-width="1.5" stroke-linejoin="round"/><circle cx="634.6" cy="356.2" r="1.7" fill="#fbe0b0" stroke="#e27a1c" stroke-width="1.2"/><path d="M639.9 347.9L643.6 350.2L640.4 351.59999999999997Z" fill="#b88a5a"/><path d="M643.2 354.59999999999997L644.2 356.8L642.2 356.8Z" fill="#9a8a70"/><path fill="none" stroke="#555" stroke-width="1.3" d="M344.3 402.7L348 406.5L344.3 410.3"/><path d="M638.53 406.72L640.28 407.05L640.28 409.35L638.53 409.68L638.43 409.93L639.43 411.40L637.80 413.03L636.33 412.03L636.08 412.13L635.75 413.88L633.45 413.88L633.12 412.13L632.87 412.03L631.40 413.03L629.77 411.40L630.77 409.93L630.67 409.68L628.92 409.35L628.92 407.05L630.67 406.72L630.77 406.47L629.77 405.00L631.40 403.37L632.87 404.37L633.12 404.27L633.45 402.52L635.75 402.52L636.08 404.27L636.33 404.37L637.80 403.37L639.43 405.00L638.43 406.47Z" fill="#f7c47e" stroke="#e27a1c" stroke-width="1.5" stroke-linejoin="round"/><circle cx="634.6" cy="408.2" r="1.7" fill="#fbe0b0" stroke="#e27a1c" stroke-width="1.2"/><path d="M639.9 399.9L643.6 402.2L640.4 403.59999999999997Z" fill="#b88a5a"/><path d="M643.2 406.59999999999997L644.2 408.8L642.2 408.8Z" fill="#9a8a70"/><path fill="none" stroke="#555" stroke-width="1.3" d="M344.3 454.7L348 458.5L344.3 462.3"/><path d="M638.53 458.72L640.28 459.05L640.28 461.35L638.53 461.68L638.43 461.93L639.43 463.40L637.80 465.03L636.33 464.03L636.08 464.13L635.75 465.88L633.45 465.88L633.12 464.13L632.87 464.03L631.40 465.03L629.77 463.40L630.77 461.93L630.67 461.68L628.92 461.35L628.92 459.05L630.67 458.72L630.77 458.47L629.77 457.00L631.40 455.37L632.87 456.37L633.12 456.27L633.45 454.52L635.75 454.52L636.08 456.27L636.33 456.37L637.80 455.37L639.43 457.00L638.43 458.47Z" fill="#f7c47e" stroke="#e27a1c" stroke-width="1.5" stroke-linejoin="round"/><circle cx="634.6" cy="460.2" r="1.7" fill="#fbe0b0" stroke="#e27a1c" stroke-width="1.2"/><path d="M639.9 451.9L643.6 454.2L640.4 455.59999999999997Z" fill="#b88a5a"/><path d="M643.2 458.59999999999997L644.2 460.8L642.2 460.8Z" fill="#9a8a70"/><path fill="none" stroke="#555" stroke-width="1.3" d="M344.3 506.7L348 510.5L344.3 514.3"/><path d="M638.53 510.72L640.28 511.05L640.28 513.35L638.53 513.68L638.43 513.93L639.43 515.40L637.80 517.03L636.33 516.03L636.08 516.13L635.75 517.88L633.45 517.88L633.12 516.13L632.87 516.03L631.40 517.03L629.77 515.40L630.77 513.93L630.67 513.68L628.92 513.35L628.92 511.05L630.67 510.72L630.77 510.47L629.77 509.00L631.40 507.37L632.87 508.37L633.12 508.27L633.45 506.52L635.75 506.52L636.08 508.27L636.33 508.37L637.80 507.37L639.43 509.00L638.43 510.47Z" fill="#f7c47e" stroke="#e27a1c" stroke-width="1.5" stroke-linejoin="round"/><circle cx="634.6" cy="512.2" r="1.7" fill="#fbe0b0" stroke="#e27a1c" stroke-width="1.2"/><path d="M639.9 503.90000000000003L643.6 506.20000000000005L640.4 507.6Z" fill="#b88a5a"/><path d="M643.2 510.6L644.2 512.8000000000001L642.2 512.8000000000001Z" fill="#9a8a70"/><path fill="none" stroke="#555" stroke-width="1.3" d="M344.3 558.7L348 562.5L344.3 566.3"/><path d="M638.53 562.72L640.28 563.05L640.28 565.35L638.53 565.68L638.43 565.93L639.43 567.40L637.80 569.03L636.33 568.03L636.08 568.13L635.75 569.88L633.45 569.88L633.12 568.13L632.87 568.03L631.40 569.03L629.77 567.40L630.77 565.93L630.67 565.68L628.92 565.35L628.92 563.05L630.67 562.72L630.77 562.47L629.77 561.00L631.40 559.37L632.87 560.37L633.12 560.27L633.45 558.52L635.75 558.52L636.08 560.27L636.33 560.37L637.80 559.37L639.43 561.00L638.43 562.47Z" fill="#f7c47e" stroke="#e27a1c" stroke-width="1.5" stroke-linejoin="round"/><circle cx="634.6" cy="564.2" r="1.7" fill="#fbe0b0" stroke="#e27a1c" stroke-width="1.2"/><path d="M639.9 555.9000000000001L643.6 558.2L640.4 559.6Z" fill="#b88a5a"/><path d="M643.2 562.6L644.2 564.8000000000001L642.2 564.8000000000001Z" fill="#9a8a70"/><path fill="none" stroke="#555" stroke-width="1.3" d="M344.3 610.7L348 614.5L344.3 618.3"/><path d="M638.53 614.72L640.28 615.05L640.28 617.35L638.53 617.68L638.43 617.93L639.43 619.40L637.80 621.03L636.33 620.03L636.08 620.13L635.75 621.88L633.45 621.88L633.12 620.13L632.87 620.03L631.40 621.03L629.77 619.40L630.77 617.93L630.67 617.68L628.92 617.35L628.92 615.05L630.67 614.72L630.77 614.47L629.77 613.00L631.40 611.37L632.87 612.37L633.12 612.27L633.45 610.52L635.75 610.52L636.08 612.27L636.33 612.37L637.80 611.37L639.43 613.00L638.43 614.47Z" fill="#f7c47e" stroke="#e27a1c" stroke-width="1.5" stroke-linejoin="round"/><circle cx="634.6" cy="616.2" r="1.7" fill="#fbe0b0" stroke="#e27a1c" stroke-width="1.2"/><path d="M639.9 607.9000000000001L643.6 610.2L640.4 611.6Z" fill="#b88a5a"/><path d="M643.2 614.6L644.2 616.8000000000001L642.2 616.8000000000001Z" fill="#9a8a70"/><path fill="none" stroke="#555" stroke-width="1.3" d="M344.3 662.7L348 666.5L344.3 670.3"/><path d="M638.53 666.72L640.28 667.05L640.28 669.35L638.53 669.68L638.43 669.93L639.43 671.40L637.80 673.03L636.33 672.03L636.08 672.13L635.75 673.88L633.45 673.88L633.12 672.13L632.87 672.03L631.40 673.03L629.77 671.40L630.77 669.93L630.67 669.68L628.92 669.35L628.92 667.05L630.67 666.72L630.77 666.47L629.77 665.00L631.40 663.37L632.87 664.37L633.12 664.27L633.45 662.52L635.75 662.52L636.08 664.27L636.33 664.37L637.80 663.37L639.43 665.00L638.43 666.47Z" fill="#f7c47e" stroke="#e27a1c" stroke-width="1.5" stroke-linejoin="round"/><circle cx="634.6" cy="668.2" r="1.7" fill="#fbe0b0" stroke="#e27a1c" stroke-width="1.2"/><path d="M639.9 659.9000000000001L643.6 662.2L640.4 663.6Z" fill="#b88a5a"/><path d="M643.2 666.6L644.2 668.8000000000001L642.2 668.8000000000001Z" fill="#9a8a70"/><path fill="none" stroke="#555" stroke-width="1.3" d="M344.3 714.7L348 718.5L344.3 722.3"/><path d="M638.53 718.72L640.28 719.05L640.28 721.35L638.53 721.68L638.43 721.93L639.43 723.40L637.80 725.03L636.33 724.03L636.08 724.13L635.75 725.88L633.45 725.88L633.12 724.13L632.87 724.03L631.40 725.03L629.77 723.40L630.77 721.93L630.67 721.68L628.92 721.35L628.92 719.05L630.67 718.72L630.77 718.47L629.77 717.00L631.40 715.37L632.87 716.37L633.12 716.27L633.45 714.52L635.75 714.52L636.08 716.27L636.33 716.37L637.80 715.37L639.43 717.00L638.43 718.47Z" fill="#f7c47e" stroke="#e27a1c" stroke-width="1.5" stroke-linejoin="round"/><circle cx="634.6" cy="720.2" r="1.7" fill="#fbe0b0" stroke="#e27a1c" stroke-width="1.2"/><path d="M639.9 711.9000000000001L643.6 714.2L640.4 715.6Z" fill="#b88a5a"/><path d="M643.2 718.6L644.2 720.8000000000001L642.2 720.8000000000001Z" fill="#9a8a70"/><path fill="none" stroke="#555" stroke-width="1.3" d="M344.3 766.7L348 770.5L344.3 774.3"/><path fill="none" stroke="#4d50aa" stroke-width="1.7" stroke-linecap="round" d="M1889.5 503.5L1884.2 508L1889.5 512.5"/><g fill="none" stroke="#fff" stroke-width="1.8" stroke-linecap="round"><ellipse cx="1887" cy="540" rx="6.6" ry="6.4"/><path d="M1882.5 537.5h9M1881 540.3h12M1882.3 543.1h9.4"/><path d="M1884 533.8L1882.3 528.6M1890 533.8L1891.7 528.6M1880.6 537.1L1875.5 534.6M1880.3 540.3H1874.6M1880.8 543.5L1876 546.3M1893.4 537.1L1898.5 534.6M1893.7 540.3H1899.4M1893.2 543.5L1898 546.3"/></g></svg>
</body></html>
